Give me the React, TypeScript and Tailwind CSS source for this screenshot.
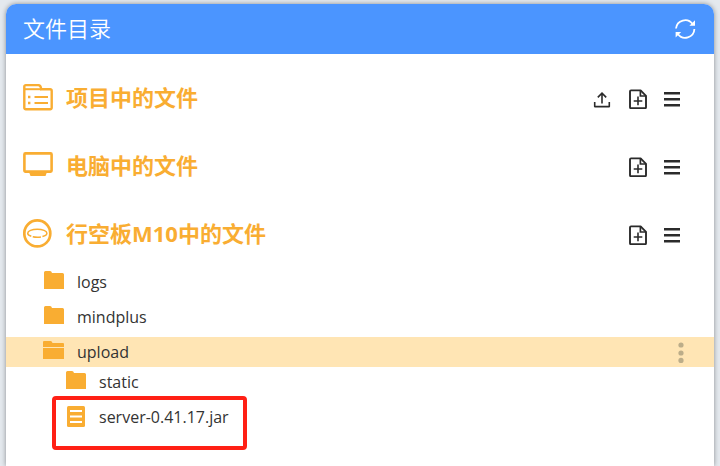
import React from 'react';

const RefreshIcon = () => (
  <svg viewBox="0 0 22 22" className="h-[22px] w-[22px]" fill="none" stroke="currentColor" strokeWidth="1.8">
    <path d="M2 10.5A9.2 9.2 0 0 1 18.6 6" />
    <path d="M20.4 11A9.2 9.2 0 0 1 3.8 16" />
    <path d="M21 2.2v5.6h-5.6z" fill="currentColor" stroke="none" />
    <path d="M1.6 19.6V14h5.6z" fill="currentColor" stroke="none" />
  </svg>
);

const UploadIcon = () => (
  <svg viewBox="0 0 20 20" className="h-5 w-5" fill="none" stroke="currentColor" strokeWidth="1.6">
    <path d="M10 14.5V4.4M5.8 8.4 10 4.2l4.2 4.2" />
    <path d="M2.7 13v4.6h14.6V13" strokeLinejoin="round" />
  </svg>
);

const AddFileIcon = () => (
  <svg viewBox="0 0 20 20" className="h-5 w-5" fill="none" stroke="currentColor" strokeWidth="1.9">
    <path d="M12.6 1.4H3a1 1 0 0 0-1 1v15.8a1 1 0 0 0 1 1h14a1 1 0 0 0 1-1V6.8z" strokeLinejoin="round" />
    <path d="M12.4 1.4V7H18" strokeWidth="1.7" />
    <path d="M10 7.6v8.6M5.7 12h8.6" strokeWidth="1.6" />
  </svg>
);

const MenuIcon = () => (
  <svg viewBox="0 0 20 20" className="h-5 w-5" fill="currentColor">
    <path d="M0 3h16v2.4H0zM0 9h16v2.4H0zM0 15h16v2.4H0z" />
  </svg>
);

const ProjectIcon = () => (
  <svg viewBox="0 0 30 30" className="h-[30px] w-[30px]" fill="none" stroke="currentColor">
    <path d="M1.3 25.8V4.6a1.5 1.5 0 0 1 1.5-1.5h12.5q2.6 0 2.9 4.1h9a1.5 1.5 0 0 1 1.5 1.5v17.1a1.5 1.5 0 0 1-1.5 1.5H2.8a1.5 1.5 0 0 1-1.5-1.5z" strokeWidth="2.4" />
    <path d="M1.2 7.2h17" strokeWidth="2" />
    <path d="M11.5 15h13.5M11.5 21h13.5" strokeWidth="1.8" />
    <path d="M5 15h2.4M5 21h2.4" strokeWidth="2.4" />
  </svg>
);

const ComputerIcon = () => (
  <svg viewBox="0 0 30 30" className="h-[30px] w-[30px]" fill="none" stroke="currentColor">
    <rect x="1.4" y="3.4" width="27.2" height="18.2" rx="1" strokeWidth="2.6" />
    <path d="M6 22h18l-1.5 4h-15z" fill="currentColor" stroke="none" />
  </svg>
);

const BoardIcon = () => (
  <svg viewBox="0 0 30 30" className="h-[30px] w-[30px]" fill="none" stroke="currentColor">
    <circle cx="14.3" cy="15.4" r="13" strokeWidth="2.7" />
    <ellipse cx="14.3" cy="15.2" rx="9.6" ry="4" strokeWidth="1.5" strokeDasharray="6 1.5 8 1.5 60" />
  </svg>
);

const FolderIcon = () => (
  <svg viewBox="0 0 22 22" className="h-[22px] w-[22px]" fill="currentColor">
    <path d="M1 1.5Q1 0 2.5 0H7q1.5 0 2 2h10.5Q21 2 21 3.5V18H1z" />
  </svg>
);

const OpenFolderIcon = () => (
  <svg viewBox="0 0 22 22" className="h-[22px] w-[22px]" fill="currentColor">
    <path d="M0 1Q0 0 1 0h6.5Q9 0 9.5 2H20q1 0 1 1v3H0zM0 7h21v11H0z" />
  </svg>
);

const FileIcon = () => (
  <svg viewBox="0 0 22 22" className="h-[22px] w-[22px]">
    <rect x="2" y="0" width="18" height="21" rx="1.5" fill="currentColor" />
    <path d="M5 5h12M5 10.5h12M5 16h12" stroke="white" strokeWidth="1.8" />
  </svg>
);

interface SectionProps {
  title: string;
  icon: React.ReactNode;
  canUpload?: boolean;
}

const Section: React.FC<SectionProps> = ({ title, icon, canUpload }) => (
  <div className="flex h-[68px] items-center pr-[30px] pl-[17px] text-[#f9ad32]">
    {icon}
    <h2 className="ml-[13px] flex-1 text-[22px] leading-8 font-bold">{title}</h2>
    <div className="flex gap-4 pt-1 text-[#2b2b2b]">
      {canUpload && (
        <button type="button" aria-label="上传"><UploadIcon /></button>
      )}
      <button type="button" aria-label="新建文件"><AddFileIcon /></button>
      <button type="button" aria-label="菜单"><MenuIcon /></button>
    </div>
  </div>
);

export default function App() {
  return (
    <div className="flex min-h-screen flex-col bg-[#e4e9ee] px-1.5 pt-1 font-['Open_Sans','Noto_Sans_CJK_SC',sans-serif]">
      <main className="flex-1 rounded-t-[10px] bg-white shadow-[0_0_5px_rgba(0,0,0,0.4)]">
        <header className="flex h-[50px] items-center justify-between rounded-t-[10px] bg-[#4b95ff] pr-[18px] pl-[17px] text-white">
          <h1 className="pb-1 font-['Noto_Sans_CJK_SC',sans-serif] text-[22px] font-[350]">文件目录</h1>
          <button type="button" aria-label="刷新"><RefreshIcon /></button>
        </header>

        <div className="pt-[9px]">
          <Section title="项目中的文件" icon={<ProjectIcon />} canUpload />
          <Section title="电脑中的文件" icon={<ComputerIcon />} />
          <Section title="行空板M10中的文件" icon={<BoardIcon />} />
        </div>

        <ul className="text-[16px] leading-[30px] text-[#333]">
          <li className="mb-[5px] flex items-center gap-3 pl-[37px]">
            <span className="text-[#f9ad32]"><FolderIcon /></span>
            logs
          </li>
          <li className="mb-[5px] flex items-center gap-3 pl-[37px]">
            <span className="text-[#f9ad32]"><FolderIcon /></span>
            mindplus
          </li>
          <li>
            <div className="flex items-center gap-3 bg-[#ffe5b4] pr-[29px] pl-[37px]">
              <span className="text-[#f9ad32]"><OpenFolderIcon /></span>
              <span className="flex-1">upload</span>
              <button type="button" aria-label="更多" className="text-[#bcad89]">
                <svg viewBox="0 0 8 22" className="h-[22px] w-2" fill="currentColor">
                  <circle cx="4" cy="4" r="2.6" />
                  <circle cx="4" cy="12" r="2.6" />
                  <circle cx="4" cy="19.4" r="2.6" />
                </svg>
              </button>
            </div>
            <ul>
              <li className="mb-[5px] flex items-center gap-3 pl-[59px]">
                <span className="text-[#f9ad32]"><FolderIcon /></span>
                static
              </li>
              <li className="relative flex items-center gap-3 pl-[59px]">
                <span className="text-[#f9ad32]"><FileIcon /></span>
                server-0.41.17.jar
                <div className="absolute -top-1.5 left-[46px] h-[54px] w-[195px] rounded border-4 border-[#ff2015]" />
              </li>
            </ul>
          </li>
        </ul>
      </main>
    </div>
  );
}
